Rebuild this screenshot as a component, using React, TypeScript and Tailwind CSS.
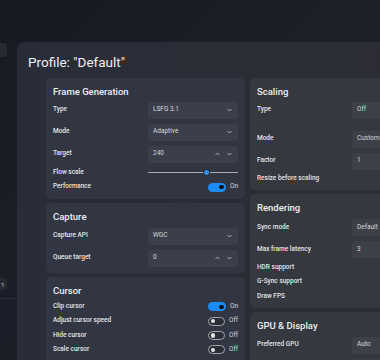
import React from "react";

const font = { fontFamily: 'Roboto, "Noto Sans", sans-serif' };

function Chevron({ up = false }: { up?: boolean }) {
  return (
    <svg width="5" height="4" viewBox="0 0 5 4" className="shrink-0">
      <polyline
        points={up ? "0.5,3 2.5,1 4.5,3" : "0.5,1 2.5,3 4.5,1"}
        fill="none"
        stroke="#c4c6cc"
        strokeWidth="0.8"
      />
    </svg>
  );
}

function Select({ value, right = false }: { value: string; right?: boolean }) {
  return (
    <div
      className={`flex h-[17px] w-[90px] items-center rounded-[3px] pl-[5px] pr-[6px] text-[6.5px] text-[#d6d7db] ${
        right ? "bg-[#3e4047]" : "bg-[#3b3f4b]"
      }`}
    >
      <span className="flex-1">{value}</span>
      <Chevron />
    </div>
  );
}

function NumberBox({ value, right = false }: { value: string; right?: boolean }) {
  return (
    <div
      className={`flex h-[17px] w-[90px] items-center gap-[7px] rounded-[3px] pl-[5px] pr-[6px] text-[6.5px] text-[#d6d7db] ${
        right ? "bg-[#3e4047]" : "bg-[#3b3f4b]"
      }`}
    >
      <span className="flex-1">{value}</span>
      {!right && <Chevron up />}
      {!right && <Chevron />}
    </div>
  );
}

function Toggle({ on }: { on: boolean }) {
  return (
    <div className="ml-auto flex w-[30px] items-center gap-[4px]">
      {on ? (
        <div className="flex h-[9px] w-[18px] items-center justify-end rounded-full bg-[#1a8cf5] pr-[2px]">
          <div className="h-[4.5px] w-[4.5px] rounded-full bg-[#0d0f14]" />
        </div>
      ) : (
        <div className="flex h-[9px] w-[18px] items-center rounded-full border border-[#a4a6ac] bg-[#2b2e37] pl-[1.5px]">
          <div className="h-[4.5px] w-[4.5px] rounded-full bg-[#e2e3e6]" />
        </div>
      )}
      <span className="text-[6.5px] text-[#d6d7db]">{on ? "On" : "Off"}</span>
    </div>
  );
}

function Row({ label, children, h = "h-[22px]" }: { label: string; children?: React.ReactNode; h?: string }) {
  return (
    <div className={`flex ${h} items-center`}>
      <span className="w-[95px] shrink-0 text-[6.5px] font-medium text-[#e4e5e8]">{label}</span>
      {children}
    </div>
  );
}

function Card({
  title,
  children,
  right = false,
  mt = "mt-[2px]",
  pb = "pb-[5px]",
}: {
  title: string;
  children: React.ReactNode;
  right?: boolean;
  mt?: string;
  pb?: string;
}) {
  return (
    <div
      className={`rounded-[5px] px-[7px] pt-[8px] ${pb} ${
        right ? "bg-[#36383f]" : "bg-[#323643]"
      }`}
    >
      <div className="h-[11px] text-[9.5px] font-medium leading-[11px] text-[#eceef1]">{title}</div>
      <div className={`flex flex-col ${mt}`}>{children}</div>
    </div>
  );
}

export default function App() {
  return (
    <div
      style={font}
      className="flex h-[360px] w-[380px] overflow-hidden bg-gradient-to-br from-[#161920] via-[#1d2029] to-[#1e1f23]"
    >
      {/* sidebar strip */}
      <div className="flex w-[17px] shrink-0 flex-col bg-[#1c1f28]/40">
        <div className="mt-[43px] h-[14px] w-[7px] rounded-r-[3px] bg-[#272a33]" />
        <div className="mt-[221px] flex h-[12px] w-[7px] items-center rounded-r-[3px] bg-[#272a33] pl-[1px] text-[6px] text-[#c8c9cc]">
          1
        </div>
        <div className="mt-[8px] h-px w-full bg-[#2d303a]" />
      </div>

      {/* main panel */}
      <div className="mt-[42px] flex-1 rounded-tl-[8px] bg-gradient-to-r from-[#292d39] to-[#2c2d32] pl-[11px] pt-[10px]">
        <div className="h-[20px] text-[13.5px] leading-[20px] text-[#eef0f3]">Profile: "Default"</div>
        <div className="ml-[18px] mt-[6px] flex gap-[5px]">
          {/* left column */}
          <div className="flex w-[199px] shrink-0 flex-col gap-[4px]">
            <Card title="Frame Generation">
              <Row label="Type">
                <Select value="LSFG 3.1" />
              </Row>
              <Row label="Mode">
                <Select value="Adaptive" />
              </Row>
              <Row label="Target">
                <NumberBox value="240" />
              </Row>
              <Row label="Flow scale" h="h-[15px]">
                <div className="relative flex h-[7px] w-[90px] items-center">
                  <div className="h-px w-full bg-[#a9abb1]" />
                  <div className="absolute left-[55px] top-0 flex h-[7px] w-[7px] items-center justify-center rounded-full bg-[#2a2d36]">
                    <div className="h-[4.5px] w-[4.5px] rounded-full bg-[#2a90f0]" />
                  </div>
                </div>
              </Row>
              <Row label="Performance" h="h-[14.3px]">
                <Toggle on />
              </Row>
            </Card>
            <Card title="Capture" mt="mt-[3px]" pb="pb-[4px]">
              <Row label="Capture API">
                <Select value="WGC" />
              </Row>
              <Row label="Queue target">
                <NumberBox value="0" />
              </Row>
            </Card>
            <Card title="Cursor" mt="mt-[3.5px]">
              <Row label="Clip cursor" h="h-[14.3px]">
                <Toggle on />
              </Row>
              <Row label="Adjust cursor speed" h="h-[14.3px]">
                <Toggle on={false} />
              </Row>
              <Row label="Hide cursor" h="h-[14.3px]">
                <Toggle on={false} />
              </Row>
              <Row label="Scale cursor" h="h-[14.3px]">
                <Toggle on={false} />
              </Row>
            </Card>
          </div>

          {/* right column */}
          <div className="flex w-[199px] shrink-0 flex-col gap-[4px]">
            <Card title="Scaling" right pb="pb-[4px]">
              <Row label="Type">
                <Select value="Off" right />
              </Row>
              <div className="h-[7px]" />
              <Row label="Mode">
                <Select value="Custom" right />
              </Row>
              <Row label="Factor">
                <NumberBox value="1" right />
              </Row>
              <Row label="Resize before scaling" h="h-[14.3px]" />
            </Card>
            <Card title="Rendering" right mt="mt-[3.5px]" pb="pb-[4.5px]">
              <Row label="Sync mode">
                <Select value="Default" right />
              </Row>
              <Row label="Max frame latency">
                <NumberBox value="3" right />
              </Row>
              <Row label="HDR support" h="h-[14.3px]" />
              <Row label="G-Sync support" h="h-[14.3px]" />
              <Row label="Draw FPS" h="h-[14.3px]" />
            </Card>
            <Card title="GPU & Display" right mt="mt-[3px]">
              <Row label="Preferred GPU">
                <Select value="Auto" right />
              </Row>
              <Row label="">
                <Select value="" right />
              </Row>
            </Card>
          </div>
        </div>
      </div>
    </div>
  );
}
